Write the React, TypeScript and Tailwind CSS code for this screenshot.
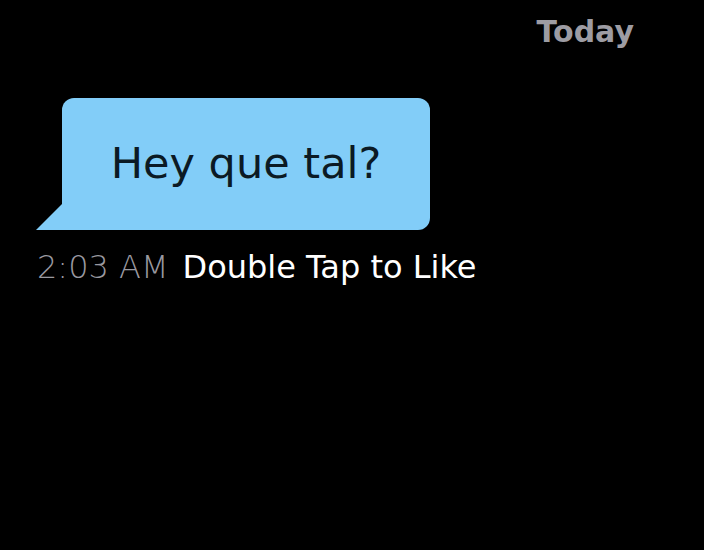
import React from "react";

export default function App() {
  return (
    <div className="w-[704px] h-[550px] bg-black flex flex-col" style={{ fontFamily: '"DejaVu Sans", sans-serif' }}>
      <div className="flex justify-end pr-[70px] pt-[12px] h-[98px]">
        <span className="text-[30px] leading-[40px] font-bold text-[#9d9ca3]">
          Today
        </span>
      </div>
      <div className="relative ml-[62px] w-[368px] h-[132px] bg-[#82cdf8] rounded-[12px] rounded-bl-none flex items-center justify-center">
        <svg className="absolute left-[-26px] bottom-0" width="27" height="26" viewBox="0 0 27 26">
          <polygon points="0,26 27,26 27,0 26,0" fill="#82cdf8" />
        </svg>
        <span className="text-[43px] leading-none text-[#0b1a24] -mt-[2px]">Hey que tal?</span>
      </div>
      <div className="flex items-baseline ml-[37px] mt-[15px] gap-[14px]">
        <span className="text-[32px] leading-[44px] font-extralight text-[#9a99a0]">2:03 AM</span>
        <span className="text-[32px] leading-[44px] text-white">Double Tap to Like</span>
      </div>
    </div>
  );
}
